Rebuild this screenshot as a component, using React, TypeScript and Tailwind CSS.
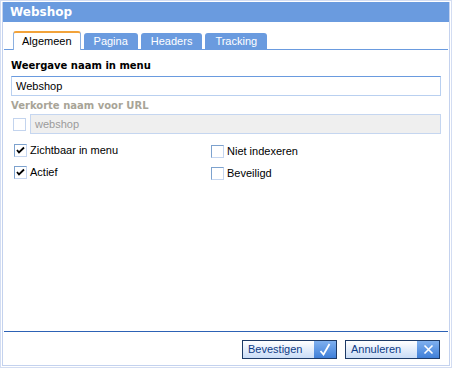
import React from "react";

const FONT = { fontFamily: '"Liberation Sans", Arial, sans-serif' };
const BOLD = { fontFamily: '"DejaVu Sans", Verdana, sans-serif' };

function Check({ checked, disabled }: { checked?: boolean; disabled?: boolean }) {
  return (
    <span
      className={
        "h-[13px] w-[13px] border flex items-center justify-center bg-white shrink-0 " +
        (disabled ? "border-[#c3d4ee]" : "border-[#7da2ce] border-r-[#c5d6f0] border-b-[#c5d6f0]")
      }
    >
      {checked && (
        <svg width="9" height="9" viewBox="0 0 9 9">
          <path d="M1 4l2 2.5L8 1.5" stroke="#000" strokeWidth="1.8" fill="none" />
        </svg>
      )}
    </span>
  );
}

function Tab({ label, active }: { label: string; active?: boolean }) {
  if (active) {
    return (
      <div className="h-[19px] px-[8px] -mb-px bg-white border-t-2 border-t-[#f2a33a] border-x border-x-[#8cb0e0] rounded-t-[3px] flex items-center text-[11px] text-black">
        {label}
      </div>
    );
  }
  return (
    <div className="h-[16px] px-[10px] bg-[#6a9bdf] rounded-t-[3px] flex items-center text-[11px] text-white">
      {label}
    </div>
  );
}

function Button({ label, icon }: { label: string; icon: "ok" | "x" }) {
  return (
    <div className="h-[19px] w-[95px] border border-[#1d3a66] flex">
      <div className="flex-1 bg-gradient-to-b from-white to-[#c9dcf7] text-[#0e3b86] text-[11px] flex items-center pl-[5px]">
        {label}
      </div>
      <div className="w-[22px] bg-gradient-to-b from-[#7fb0ef] to-[#3f7fd8] flex items-center justify-center">
        {icon === "ok" ? (
          <svg width="12" height="13" viewBox="0 0 12 13">
            <path d="M1.5 8l3 3.5L10.5 1" stroke="#fff" strokeWidth="1.8" fill="none" />
          </svg>
        ) : (
          <svg width="11" height="11" viewBox="0 0 11 11">
            <path d="M1.5 1.5l8 8M9.5 1.5l-8 8" stroke="#fff" strokeWidth="1.6" fill="none" />
          </svg>
        )}
      </div>
    </div>
  );
}

export default function App() {
  return (
    <div className="w-[452px] h-[368px] bg-white border border-[#d3ddf2] p-px" style={FONT}>
      <div className="h-full border border-[#c4d2ee] border-t-0 flex flex-col">
        <div className="h-[20px] bg-[#6a9bdf] flex items-center pl-[7px] text-white text-[12px] font-bold" style={BOLD}>
          Webshop
        </div>

        <div className="mt-[9px] flex items-end gap-[3px] pl-[9px] border-b border-[#6a9bdf] mx-px">
          <Tab label="Algemeen" active />
          <Tab label="Pagina" />
          <Tab label="Headers" />
          <Tab label="Tracking" />
        </div>

        <div className="px-[8px] pt-[9px] flex-1">
          <div className="text-[10px] font-bold text-black leading-[13px]" style={BOLD}>
            Weergave naam in menu
          </div>
          <div className="mt-[4px] h-[20px] border border-[#b9d0f0] border-t-[#6a9bdf] flex items-center pl-[4px] text-[11px] text-black">
            Webshop
          </div>
          <div className="mt-[3px] text-[10px] font-bold text-[#a8a497] leading-[13px]" style={BOLD}>
            Verkorte naam voor URL
          </div>
          <div className="mt-[2px] flex items-center gap-[4px]">
            <span className="ml-[2px]">
              <Check disabled />
            </span>
            <div className="flex-1 h-[20px] bg-[#efefef] border border-[#c5d6f0] flex items-center pl-[4px] text-[11px] text-[#9b9b9b]">
              webshop
            </div>
          </div>

          <div className="mt-[9px] grid grid-cols-[200px_1fr] gap-y-[7px] text-[11px] leading-[13px] text-black">
            <label className="flex items-center gap-[3px] ml-[3px]">
              <Check checked />
              Zichtbaar in menu
            </label>
            <label className="flex items-center gap-[3px] mt-[2px]">
              <Check />
              Niet indexeren
            </label>
            <label className="flex items-center gap-[3px] ml-[3px]">
              <Check checked />
              Actief
            </label>
            <label className="flex items-center gap-[3px] mt-[2px]">
              <Check />
              Beveiligd
            </label>
          </div>
        </div>

        <div className="border-t border-[#2d62b5] mx-px h-[34px] flex items-center justify-end gap-[8px] pr-[8px] pt-[1px]">
          <Button label="Bevestigen" icon="ok" />
          <Button label="Annuleren" icon="x" />
        </div>
      </div>
    </div>
  );
}
